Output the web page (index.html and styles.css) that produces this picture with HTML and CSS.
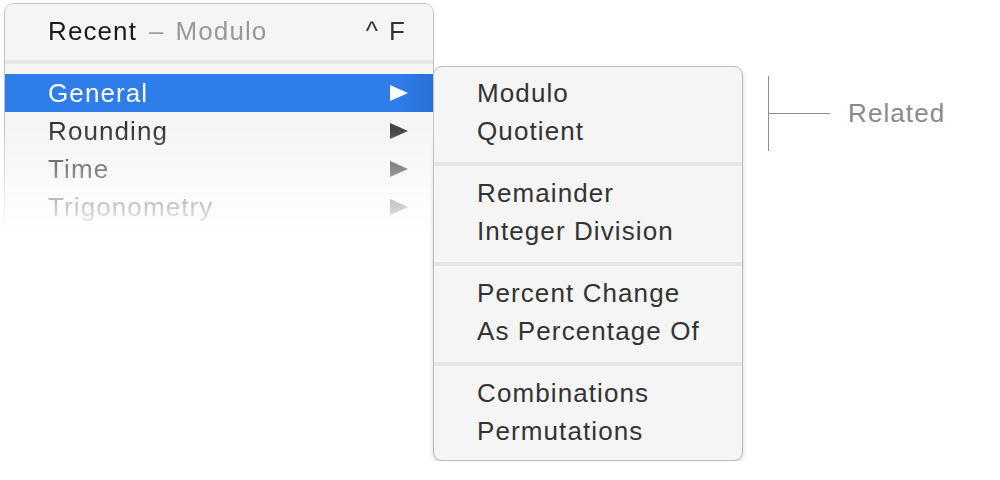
FILE: index.html
```html
<!DOCTYPE html>
<html>
<head>
<meta charset="utf-8">
<link rel="stylesheet" href="styles.css">
</head>
<body>
<div class="stage">
  <div class="menu">
    <div class="menu-head">
      <span class="recent">Recent</span><span class="dash">–</span><span class="recent-sub">Modulo</span>
      <span class="shortcut">^ F</span>
    </div>
    <div class="sep"></div>
    <div class="menu-list">
      <div class="item selected"><span class="label">General</span><svg class="arrow" viewBox="0 0 18 16"><polygon points="0,0 18,8 0,16"/></svg></div>
      <div class="item"><span class="label">Rounding</span><svg class="arrow" viewBox="0 0 18 16"><polygon points="0,0 18,8 0,16"/></svg></div>
      <div class="item"><span class="label">Time</span><svg class="arrow" viewBox="0 0 18 16"><polygon points="0,0 18,8 0,16"/></svg></div>
      <div class="item"><span class="label">Trigonometry</span><svg class="arrow" viewBox="0 0 18 16"><polygon points="0,0 18,8 0,16"/></svg></div>
    </div>
  </div>
  <div class="submenu">
    <div class="group">
      <div class="sub-item">Modulo</div>
      <div class="sub-item">Quotient</div>
    </div>
    <div class="sub-sep"></div>
    <div class="group">
      <div class="sub-item">Remainder</div>
      <div class="sub-item">Integer Division</div>
    </div>
    <div class="sub-sep"></div>
    <div class="group">
      <div class="sub-item">Percent Change</div>
      <div class="sub-item">As Percentage Of</div>
    </div>
    <div class="sub-sep"></div>
    <div class="group last">
      <div class="sub-item">Combinations</div>
      <div class="sub-item">Permutations</div>
    </div>
  </div>
  <div class="note">
    <div class="bracket"></div>
    <div class="tick"></div>
    <span class="note-label">Related</span>
  </div>
</div>
</body>
</html>
```
FILE: styles.css
```css
html, body {
  margin: 0;
  padding: 0;
  background: #ffffff;
}
body {
  font-family: "Liberation Sans", Arial, sans-serif;
  font-size: 26px;
  letter-spacing: 1.1px;
  color: #333333;
}
.stage {
  display: flex;
  align-items: flex-start;
  padding: 3px 0 0 4px;
}
.menu {
  width: 428px;
  height: 240px;
  background: #f5f5f5;
  border: 1px solid #c4c4c4;
  border-bottom: none;
  border-radius: 9px 9px 0 0;
  -webkit-mask-image: linear-gradient(to bottom, #000 0, #000 125px, rgba(0,0,0,0) 232px);
  mask-image: linear-gradient(to bottom, #000 0, #000 125px, rgba(0,0,0,0) 232px);
  flex: none;
}
.menu-head {
  display: flex;
  align-items: center;
  height: 54px;
  padding: 0 26px 2px 43px;
}
.recent { color: #1a1a1a; }
.dash { color: #a0a0a0; margin: 0 11px 0 12px; }
.recent-sub { color: #999999; }
.shortcut { margin-left: auto; color: #333333; letter-spacing: 2px; }
.sep {
  height: 4px;
  background: #e6e6e6;
}
.menu-list {
  padding-top: 10px;
}
.item {
  display: flex;
  align-items: center;
  height: 38px;
  padding: 0 25px 0 43px;
  color: #333333;
}
.item .label { flex: 1; }
.arrow {
  width: 18px;
  height: 16px;
  fill: #444444;
}
.item.selected {
  background: linear-gradient(to right, #2e7deb 0, #2e7deb 92%, #2a6fd6 100%);
  color: #ffffff;
}
.item.selected .arrow { fill: #ffffff; }
.submenu {
  width: 308px;
  margin-top: 63px;
  margin-left: -1px;
  background: #f5f5f5;
  border: 1px solid #bdbdbd;
  border-radius: 9px;
  box-shadow: 0 2px 4px rgba(0,0,0,0.18);
  padding: 8px 0 9px;
  flex: none;
}
.group {
  padding-bottom: 11px;
}
.group.last { padding-bottom: 0; }
.sub-item {
  height: 38px;
  line-height: 37px;
  padding-left: 43px;
  color: #333333;
}
.sub-sep {
  height: 4px;
  background: #e6e6e6;
  margin-bottom: 9px;
}
.note {
  display: flex;
  align-items: center;
  margin-top: 73px;
  margin-left: 25px;
  height: 75px;
}
.bracket {
  width: 1px;
  height: 75px;
  background: #8c8c8c;
}
.tick {
  width: 61px;
  height: 1px;
  background: #8c8c8c;
}
.note-label {
  margin-left: 18px;
  color: #8a8a8a;
}
```
